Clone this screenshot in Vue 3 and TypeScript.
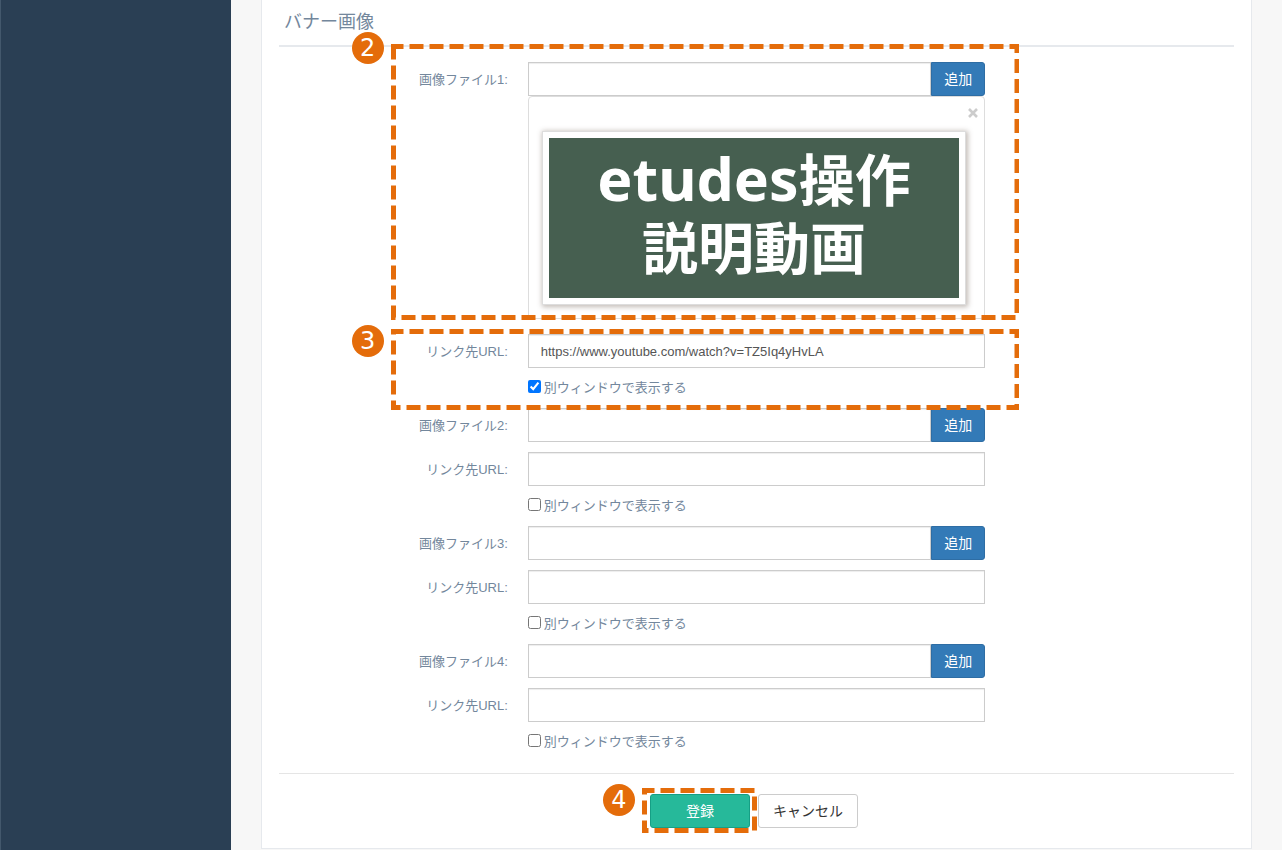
<script setup lang="ts">
import { reactive } from 'vue'

interface Banner {
  id: number
  file: string
  url: string
  newWindow: boolean
  preview: boolean
}

const banners = reactive<Banner[]>([
  { id: 1, file: '', url: 'https://www.youtube.com/watch?v=TZ5Iq4yHvLA', newWindow: true, preview: true },
  { id: 2, file: '', url: '', newWindow: false, preview: false },
  { id: 3, file: '', url: '', newWindow: false, preview: false },
  { id: 4, file: '', url: '', newWindow: false, preview: false },
])
</script>

<template>
  <div class="layout">
    <aside class="sidebar"></aside>
    <main class="content">
      <section class="panel">
        <h2 class="title">バナー画像</h2>
        <form @submit.prevent>
          <div v-for="b in banners" :key="b.id" class="banner">
            <div class="group" :class="{ 'has-preview': b.preview }">
              <div class="row">
                <label class="caption" :for="`file-${b.id}`">画像ファイル{{ b.id }}:</label>
                <div class="field">
                  <div class="file">
                    <input :id="`file-${b.id}`" v-model="b.file" class="control" type="text" />
                    <button class="btn add" type="button">追加</button>
                  </div>
                  <div v-if="b.preview" class="preview">
                    <button class="close" type="button" aria-label="閉じる" @click="b.preview = false">
                      <svg viewBox="0 0 12 12" width="12" height="12"><path d="M2 2 10 10M10 2 2 10" /></svg>
                    </button>
                    <div class="frame">
                      <div class="board">
                        <div><span class="latin">etudes</span>操作</div>
                        <div>説明動画</div>
                      </div>
                    </div>
                  </div>
                </div>
              </div>
              <div v-if="b.id === 1" class="callout callout-file">
                <svg class="dashes"><rect x="2.5" y="2.5" /></svg>
                <span class="badge">2</span>
              </div>
            </div>
            <div class="group">
              <div class="row">
                <label class="caption" :for="`url-${b.id}`">リンク先URL:</label>
                <div class="field">
                  <input :id="`url-${b.id}`" v-model="b.url" class="control" type="text" />
                  <label class="check">
                    <input v-model="b.newWindow" type="checkbox" />
                    <span>別ウィンドウで表示する</span>
                  </label>
                </div>
              </div>
              <div v-if="b.id === 1" class="callout callout-link">
                <svg class="dashes"><rect x="2.5" y="2.5" /></svg>
                <span class="badge">3</span>
              </div>
            </div>
          </div>
          <hr class="rule" />
          <div class="actions">
            <div class="submit-wrap">
              <button class="btn submit" type="submit">登録</button>
              <div class="callout callout-submit">
                <svg class="dashes"><rect x="2.5" y="2.5" /></svg>
                <span class="badge">4</span>
              </div>
            </div>
            <button class="btn cancel" type="button">キャンセル</button>
          </div>
        </form>
      </section>
    </main>
  </div>
</template>

<style>
body {
  margin: 0;
  background: #f7f7f7;
}
</style>

<style scoped>
.layout,
.layout * {
  box-sizing: border-box;
}
.layout {
  display: flex;
  min-height: 100vh;
  color: #73879c;
  font: 13px/20px "Liberation Sans", "Noto Sans CJK JP", sans-serif;
}
.sidebar {
  flex: 0 0 231px;
  border-left: 1px solid #43586c;
  background: #2a3f54;
}
.content {
  flex: 1;
  min-width: 0;
  padding: 0 30px;
}
.panel {
  padding: 0 17px 20px;
  background: #fff;
  border: 1px solid #e6e9ed;
  border-top: 0;
}
.title {
  margin: 0 0 15px;
  padding: 12px 5px 13px;
  border-bottom: 2px solid #e6e9ed;
  font-size: 18px;
  font-weight: 400;
  line-height: 20px;
}
.banner {
  margin-bottom: 10px;
}
.group {
  position: relative;
  margin-bottom: 10px;
}
.has-preview {
  margin-bottom: 15px;
}
.row {
  display: grid;
  grid-template-columns: 25% 50%;
}
.caption {
  padding: 8px 10px 0;
  text-align: right;
}
.field {
  padding: 0 10px;
}
.file {
  display: flex;
}
.control {
  display: block;
  width: 100%;
  min-width: 0;
  height: 34px;
  padding: 6px 12px;
  border: 1px solid #ccc;
  border-radius: 0;
  box-shadow: inset 0 1px 1px rgba(0, 0, 0, 0.075);
  background: #fff;
  color: #555;
  font: inherit;
}
.file .control {
  flex: 1;
}
.btn {
  height: 34px;
  padding: 0 12px;
  border: 1px solid;
  border-radius: 3px;
  font: inherit;
  font-size: 14px;
  cursor: pointer;
}
.add {
  flex: none;
  border-color: #2e6da4;
  border-radius: 0 3px 3px 0;
  background: #337ab7;
  color: #fff;
}
.preview {
  position: relative;
  padding: 34px 18px 13px 13px;
  border: 1px solid #ddd;
  border-radius: 4px;
}
.close {
  position: absolute;
  top: 10px;
  right: 5px;
  display: flex;
  padding: 0;
  border: 0;
  background: none;
  cursor: pointer;
}
.close path {
  fill: none;
  stroke: #ccc;
  stroke-width: 2.6;
}
.frame {
  padding: 6px;
  border: 1px solid #ddd;
  background: #fff;
  box-shadow: 1px 1px 5px 1px rgba(80, 60, 45, 0.35);
}
.board {
  height: 160px;
  padding-top: 5px;
  background: #465f50;
  color: #fff;
  font: 700 56px/68px "Noto Sans CJK JP", sans-serif;
  text-align: center;
  white-space: nowrap;
}
.latin {
  font-family: "Noto Sans", sans-serif;
  font-size: 59px;
  line-height: 1;
}
.check {
  display: flex;
  gap: 3px;
  width: fit-content;
  margin-top: 10px;
}
.check input {
  width: 13px;
  height: 13px;
  margin: 2px 0 0;
}
.rule {
  margin: 21px 0 20px;
  border: 0;
  border-top: 1px solid #e5e5e5;
}
.actions {
  display: flex;
  justify-content: center;
  gap: 8px;
  padding-right: 5px;
}
.submit-wrap {
  position: relative;
}
.submit,
.cancel {
  width: 100px;
}
.submit {
  display: block;
  border-color: #169f85;
  background: #26b99a;
  color: #fff;
}
.cancel {
  border-color: #ccc;
  background: #fff;
  color: #333;
}
.callout {
  position: absolute;
  z-index: 2;
  pointer-events: none;
}
.callout-file,
.callout-link {
  right: calc(25% - 24px);
  left: calc(25% - 127px);
}
.callout-file {
  top: -18px;
  bottom: -1px;
}
.callout-link {
  top: -5px;
  bottom: -12px;
}
.callout-submit {
  inset: -6px -7px -5px -8px;
}
.dashes {
  display: block;
  width: 100%;
  height: 100%;
}
.dashes rect {
  width: calc(100% - 5px);
  height: calc(100% - 5px);
  fill: none;
  stroke: #e46c0a;
  stroke-width: 5;
  stroke-dasharray: 14 6;
  stroke-dashoffset: 4;
}
.badge {
  position: absolute;
  top: -4px;
  left: -39px;
  width: 32px;
  height: 32px;
  border-radius: 50%;
  background: #e46c0a;
  color: #fff;
  font: 24px/32px "DejaVu Sans", sans-serif;
  text-align: center;
}
.callout-file .badge {
  top: -12px;
}
</style>
